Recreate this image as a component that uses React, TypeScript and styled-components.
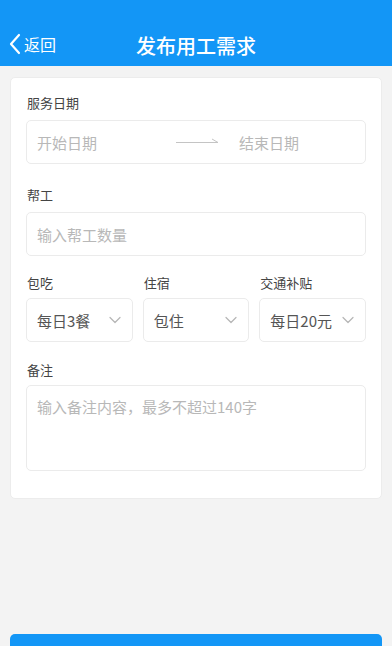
import React from 'react';
import styled, {createGlobalStyle} from "styled-components";

const GlobalStyle = createGlobalStyle`
    html, body {
        margin: 0;
        padding: 0;
        background: #f3f3f3;
        font-family: "Noto Sans CJK SC", "Noto Sans", sans-serif;
    }
`

const Chevron = () => (
    <svg width="14" height="14" viewBox="0 0 14 14" fill="none">
        <path d="M2 4.5 L7 9.5 L12 4.5" stroke="#b5b5b5" strokeWidth="1.2" strokeLinecap="round" strokeLinejoin="round"/>
    </svg>
)

const BackArrow = () => (
    <svg width="12" height="22" viewBox="0 0 12 22" fill="none">
        <path d="M10 2 L2 11 L10 20" stroke="#ffffff" strokeWidth="2.2" strokeLinecap="round" strokeLinejoin="round"/>
    </svg>
)

const options = [
    {label: '包吃', value: '每日3餐'},
    {label: '住宿', value: '包住'},
    {label: '交通补贴', value: '每日20元'},
];

export default function App() {
    return (
        <Page>
            <GlobalStyle/>
            <Header>
                <Back><BackArrow/>返回</Back>
                <Title>发布用工需求</Title>
            </Header>

            <Card>
                <Label>服务日期</Label>
                <DateBox>
                    <Placeholder>开始日期</Placeholder>
                    <Arrow>
                        <svg width="44" height="10" viewBox="0 0 44 10" fill="none">
                            <path d="M0 5.5 H42 M36 2 L42 5.5" stroke="#c4c4c4" strokeWidth="1"/>
                        </svg>
                    </Arrow>
                    <Placeholder>结束日期</Placeholder>
                </DateBox>

                <Label>帮工</Label>
                <InputBox>
                    <Placeholder>输入帮工数量</Placeholder>
                </InputBox>

                <SelectRow>
                    {options.map(o => (
                        <SelectCol key={o.label}>
                            <Label $gap={6}>{o.label}</Label>
                            <SelectBox>
                                <SelectValue>{o.value}</SelectValue>
                                <Chevron/>
                            </SelectBox>
                        </SelectCol>
                    ))}
                </SelectRow>

                <Label $gap={6}>备注</Label>
                <TextArea>
                    <Placeholder>输入备注内容，最多不超过140字</Placeholder>
                </TextArea>
            </Card>

            <Spacer/>
            <SubmitButton/>
        </Page>
    );
}

const Page = styled.div`
    width: 392px;
    height: 646px;
    display: flex;
    flex-direction: column;
    background: #f3f3f3;
    overflow: hidden;
`

const Header = styled.div`
    height: 66px;
    box-sizing: border-box;
    padding-top: 26px;
    background: #1396f6;
    display: flex;
    align-items: center;
    justify-content: center;
    position: relative;
    flex-shrink: 0;
`

const Back = styled.div`
    position: absolute;
    left: 9px;
    top: 33px;
    display: flex;
    align-items: center;
    gap: 3px;
    color: #ffffff;
    font-size: 16px;
    line-height: 22px;
`

const Title = styled.div`
    color: #ffffff;
    font-size: 20px;
    font-weight: 500;
    line-height: 38px;
`

const Card = styled.div`
    margin: 11px 10px 0;
    background: #ffffff;
    border-radius: 5px;
    padding: 16px 15px 27px;
    display: flex;
    flex-direction: column;
    border: 1px solid #ececec;
    flex-shrink: 0;
`

const Label = styled.div<{ $gap?: number }>`
    font-size: 13px;
    line-height: 18px;
    color: #444444;
    margin-bottom: ${p => p.$gap ?? 8}px;
    padding-left: 1px;
`

const Field = styled.div`
    border: 1px solid #ebebeb;
    border-radius: 5px;
    box-sizing: border-box;
    display: flex;
    align-items: center;
    padding: 0 10px;
`

const DateBox = styled(Field)`
    height: 44px;
    margin-bottom: 22px;
`

const InputBox = styled(Field)`
    height: 44px;
    margin-bottom: 18px;
`

const Placeholder = styled.span`
    font-size: 15px;
    color: #b8b8b8;
`

const Arrow = styled.span`
    display: flex;
    margin: 0 19px 0 79px;
`

const SelectRow = styled.div`
    display: grid;
    grid-template-columns: 1fr 1fr 1fr;
    gap: 10px;
    margin-bottom: 19px;
`

const SelectCol = styled.div`
    display: flex;
    flex-direction: column;
`

const SelectBox = styled(Field)`
    height: 44px;
    justify-content: space-between;
    padding: 0 10px;
`

const SelectValue = styled.span`
    font-size: 15px;
    color: #555555;
    white-space: nowrap;
`

const TextArea = styled(Field)`
    height: 86px;
    align-items: flex-start;
    padding-top: 10px;
`

const Spacer = styled.div`
    flex: 1;
`

const SubmitButton = styled.div`
    height: 12px;
    margin: 0 10px;
    background: #1396f6;
    border-radius: 5px 5px 0 0;
    flex-shrink: 0;
`
